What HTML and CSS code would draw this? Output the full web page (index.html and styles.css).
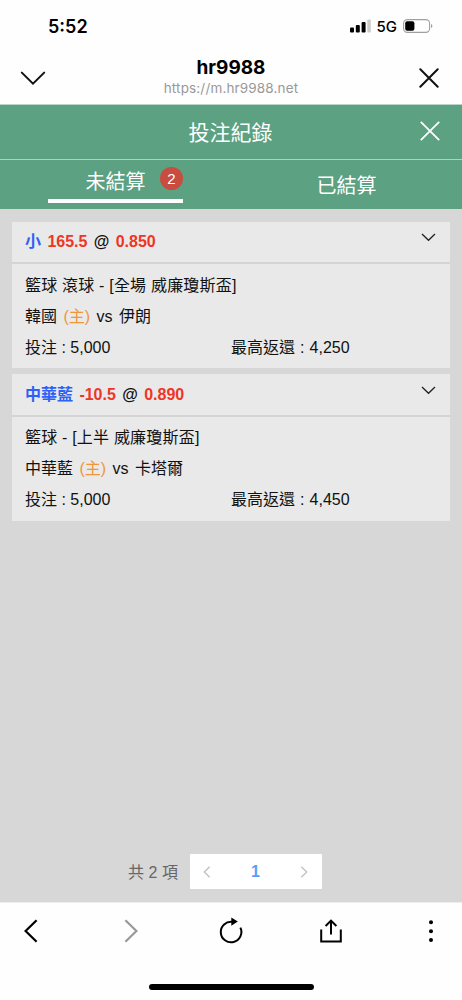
FILE: index.html
```html
<!DOCTYPE html>
<html lang="zh-Hant">
<head>
	<meta charset="UTF-8"/>
	<meta name="viewport" content="width=device-width, initial-scale=1"/>
	<title>投注紀錄</title>
	<link rel="stylesheet" href="styles.css">
</head>
<body>
	<div class="status">
		<span class="time">5:52</span>
		<div class="signal">
			<svg width="21" height="14" viewBox="0 0 21 14">
				<rect x="0" y="8.5" width="4" height="5" rx="1"/>
				<rect x="5.8" y="6" width="4" height="7.5" rx="1"/>
				<rect x="11.6" y="3" width="4" height="10.5" rx="1"/>
				<rect x="17.3" y="0.5" width="3.5" height="13" rx="1" fill="#ccc"/>
			</svg>
			<span class="net">5G</span>
			<svg width="30" height="14" viewBox="0 0 30 14">
				<rect x="0.6" y="0.6" width="26" height="12.8" rx="3.8" fill="none" stroke="#a0a0a0" stroke-width="1.1"/>
				<rect x="2.2" y="2.2" width="9.2" height="9.6" rx="2"/>
				<path d="M28 5 Q29.4 5.6 29.4 7 T28 9 Z" fill="#a0a0a0"/>
			</svg>
		</div>
	</div>

	<div class="nav">
		<svg class="nav-down" width="26" height="15" viewBox="0 0 26 15"><path d="M1.8 1.6 L13 12.6 L24.2 1.6"/></svg>
		<div class="site">
			<h1>hr9988</h1>
			<p>https://m.hr9988.net</p>
		</div>
		<svg class="nav-close" width="20" height="20" viewBox="0 0 20 20"><path d="M1.3 1.3 L18.7 18.7 M18.7 1.3 L1.3 18.7"/></svg>
	</div>

	<div class="header">
		<h2>投注紀錄</h2>
		<svg width="20" height="20" viewBox="0 0 20 20"><path d="M0.8 0.8 L19.2 19.2 M19.2 0.8 L0.8 19.2"/></svg>
	</div>

	<div class="tabs">
		<div class="tab active"><span class="label">未結算<i class="badge">2</i></span></div>
		<div class="tab"><span class="label">已結算</span></div>
	</div>

	<div class="content">
		<div class="card">
			<div class="card-head">
				<p><span class="pick">小</span> <span class="red">165.5</span> @ <span class="red">0.850</span></p>
				<svg width="15" height="9" viewBox="0 0 15 9"><path d="M1 1 L7.5 7.3 L14 1"/></svg>
			</div>
			<div class="card-body">
				<p class="league">籃球 滾球 - [全場 威廉瓊斯盃]</p>
				<p class="teams">韓國 <span class="home">(主)</span> vs 伊朗</p>
				<div class="money"><p>投注 : 5,000</p><p class="win">最高返還 : 4,250</p></div>
			</div>
		</div>
		<div class="card">
			<div class="card-head">
				<p><span class="pick">中華藍</span> <span class="red">-10.5</span> @ <span class="red">0.890</span></p>
				<svg width="15" height="9" viewBox="0 0 15 9"><path d="M1 1 L7.5 7.3 L14 1"/></svg>
			</div>
			<div class="card-body">
				<p class="league">籃球 - [上半 威廉瓊斯盃]</p>
				<p class="teams">中華藍 <span class="home">(主)</span> vs 卡塔爾</p>
				<div class="money"><p>投注 : 5,000</p><p class="win">最高返還 : 4,450</p></div>
			</div>
		</div>

		<div class="pagination">
			<span class="total">共 2 項</span>
			<div class="pager">
				<svg width="8" height="12" viewBox="0 0 8 12"><path d="M6.7 0.8 L1.3 6 L6.7 11.2"/></svg>
				<span class="page">1</span>
				<svg width="8" height="12" viewBox="0 0 8 12"><path d="M1.3 0.8 L6.7 6 L1.3 11.2"/></svg>
			</div>
		</div>
	</div>

	<div class="toolbar">
		<svg width="30" height="30" viewBox="0 0 30 30"><path d="M20.6 4.2 L9.6 15 L20.6 25.8"/></svg>
		<svg class="off" width="30" height="30" viewBox="0 0 30 30"><path d="M9.4 4.2 L20.4 15 L9.4 25.8"/></svg>
		<svg class="thin" width="30" height="30" viewBox="0 0 30 30">
			<path d="M16.5 5.8 A10.3 10.3 0 1 0 24.4 11.6"/>
			<path class="solid" d="M15.3 1.5 L21.8 5.6 L15.3 9.7 Z"/>
		</svg>
		<svg class="thin" width="30" height="30" viewBox="0 0 30 30">
			<path d="M5.2 13.5 V25.6 H24.8 V13.5 M15 18.5 V4.6 M9.6 10 L15 4.6 L20.4 10"/>
		</svg>
		<svg width="30" height="30" viewBox="0 0 30 30">
			<circle class="solid" cx="15" cy="6.3" r="2"/>
			<circle class="solid" cx="15" cy="15.2" r="2"/>
			<circle class="solid" cx="15" cy="24.1" r="2"/>
		</svg>
	</div>
	<div class="home-bar"></div>
</body>
</html>
```

FILE: styles.css
```css
* { margin: 0; padding: 0; box-sizing: border-box; }
body {
	height: 1000px;
	display: flex;
	flex-direction: column;
	overflow: hidden;
	background-color: #fefefe;
	color: #111;
	font-family: "Liberation Sans", "Noto Sans CJK TC", sans-serif;
}
svg { display: block; flex: none; }
.status, .nav, .site h1, .site p { font-family: Inter, "Liberation Sans", sans-serif; }
.status {
	height: 52px;
	padding: 0 29px 0 48px;
	display: flex;
	align-items: center;
	justify-content: space-between;
	color: #000;
}
.time {
	font-size: 18px;
	font-weight: 600;
}
.signal {
	display: flex;
	align-items: center;
	gap: 6px;
}
.net {
	font-size: 15px;
	font-weight: 500;
}
.nav {
	height: 52px;
	padding: 0 23px 0 20px;
	display: flex;
	align-items: center;
	justify-content: space-between;
}
.nav svg {
	fill: none;
	stroke: #111;
	stroke-width: 2;
	stroke-linecap: round;
}
.site {
	margin-top: -2px;
	margin-right: 3px;
	text-align: center;
}
.site h1 {
	font-size: 19px;
	line-height: 22px;
	font-weight: 700;
	color: #000;
}
.site p {
	font-size: 13.5px;
	line-height: 18px;
	letter-spacing: 0.15px;
	color: #999;
}

/* 綠色標題 */
.header {
	height: 56px;
	padding: 0 22px 2px 41px;
	display: flex;
	align-items: center;
	justify-content: space-between;
	background-color: #5ba182;
	border-top: 1px solid #b9d6c9;
	border-bottom: 1px solid #b4cfc1;
	color: #fff;
}
.header h2 {
	flex: 1;
	text-align: center;
	font-size: 21px;
	font-weight: 400;
}
.header svg {
	fill: none;
	stroke: #fff;
	stroke-width: 1.8;
}
.tabs {
	height: 49px;
	display: flex;
	background-color: #5ba182;
	color: #fff;
}
.tab {
	flex: 1;
	display: flex;
	justify-content: center;
	align-items: center;
}
.label {
	position: relative;
	padding-top: 2px;
	font-size: 20px;
	line-height: 30px;
}
.active .label {
	width: 135px;
	height: 37px;
	padding-top: 1px;
	border-bottom: 4px solid #fff;
	text-align: center;
}
.badge {
	position: absolute;
	top: 1px;
	right: 0;
	width: 23px;
	height: 23px;
	border-radius: 50%;
	background-color: #c84c40;
	font-size: 15px;
	line-height: 23px;
	font-style: normal;
}

.content {
	flex: 1;
	padding: 13px 12px;
	display: flex;
	flex-direction: column;
	gap: 6px;
	background-color: #d7d7d7;
}
.card {
	background-color: #e9e9e9;
	font-size: 16px;
}
.card-head {
	height: 42px;
	padding: 0 14px 0 13px;
	display: flex;
	justify-content: space-between;
	border-bottom: 2px solid #d4d4d4;
	font-weight: 700;
	line-height: 40px;
	word-spacing: 1.9px;
}
.card-head svg {
	margin-top: 11px;
	fill: none;
	stroke: #222;
	stroke-width: 1.3;
}
.card + .card .card-head {
	height: 43px;
	padding-top: 1px;
}
.pick { color: #2d62f5; }
.red { color: #ee3526; }
.home { color: #f0953a; }
.card-body {
	padding: 7px 13px 5px;
	line-height: 30.8px;
}
.card + .card .card-body { padding: 6px 13px 5px; }
.league { letter-spacing: 0.2px; }
.teams { word-spacing: 2px; }
.money { display: flex; }
.money p { width: 50%; }
.money .win { word-spacing: 0.6px; }

.pagination {
	margin-top: auto;
	padding-right: 12px;
	display: flex;
	align-items: center;
	justify-content: center;
	gap: 12px;
}
.total {
	margin-top: -2px;
	font-size: 16px;
	color: #666;
}
.pager {
	width: 132px;
	height: 35px;
	padding: 0 14px 0 13px;
	display: flex;
	align-items: center;
	justify-content: space-between;
	background-color: #fff;
}
.pager svg {
	fill: none;
	stroke: #c0c4cc;
	stroke-width: 1.5;
}
.page {
	color: #5b9cf8;
	font-size: 16px;
	font-weight: 700;
}

.toolbar {
	height: 79px;
	padding: 13px 16px 0;
	display: flex;
	justify-content: space-between;
	border-top: 1px solid #eee;
}
.toolbar svg {
	fill: none;
	stroke: #000;
	stroke-width: 2.2;
}
.toolbar .thin { stroke-width: 2; }
.toolbar .off { stroke: #999; }
.toolbar .solid { fill: #000; stroke: none; }
.home-bar {
	width: 165px;
	height: 6px;
	margin: 3px auto 10px;
	border-radius: 3px;
	background-color: #000;
}
```
